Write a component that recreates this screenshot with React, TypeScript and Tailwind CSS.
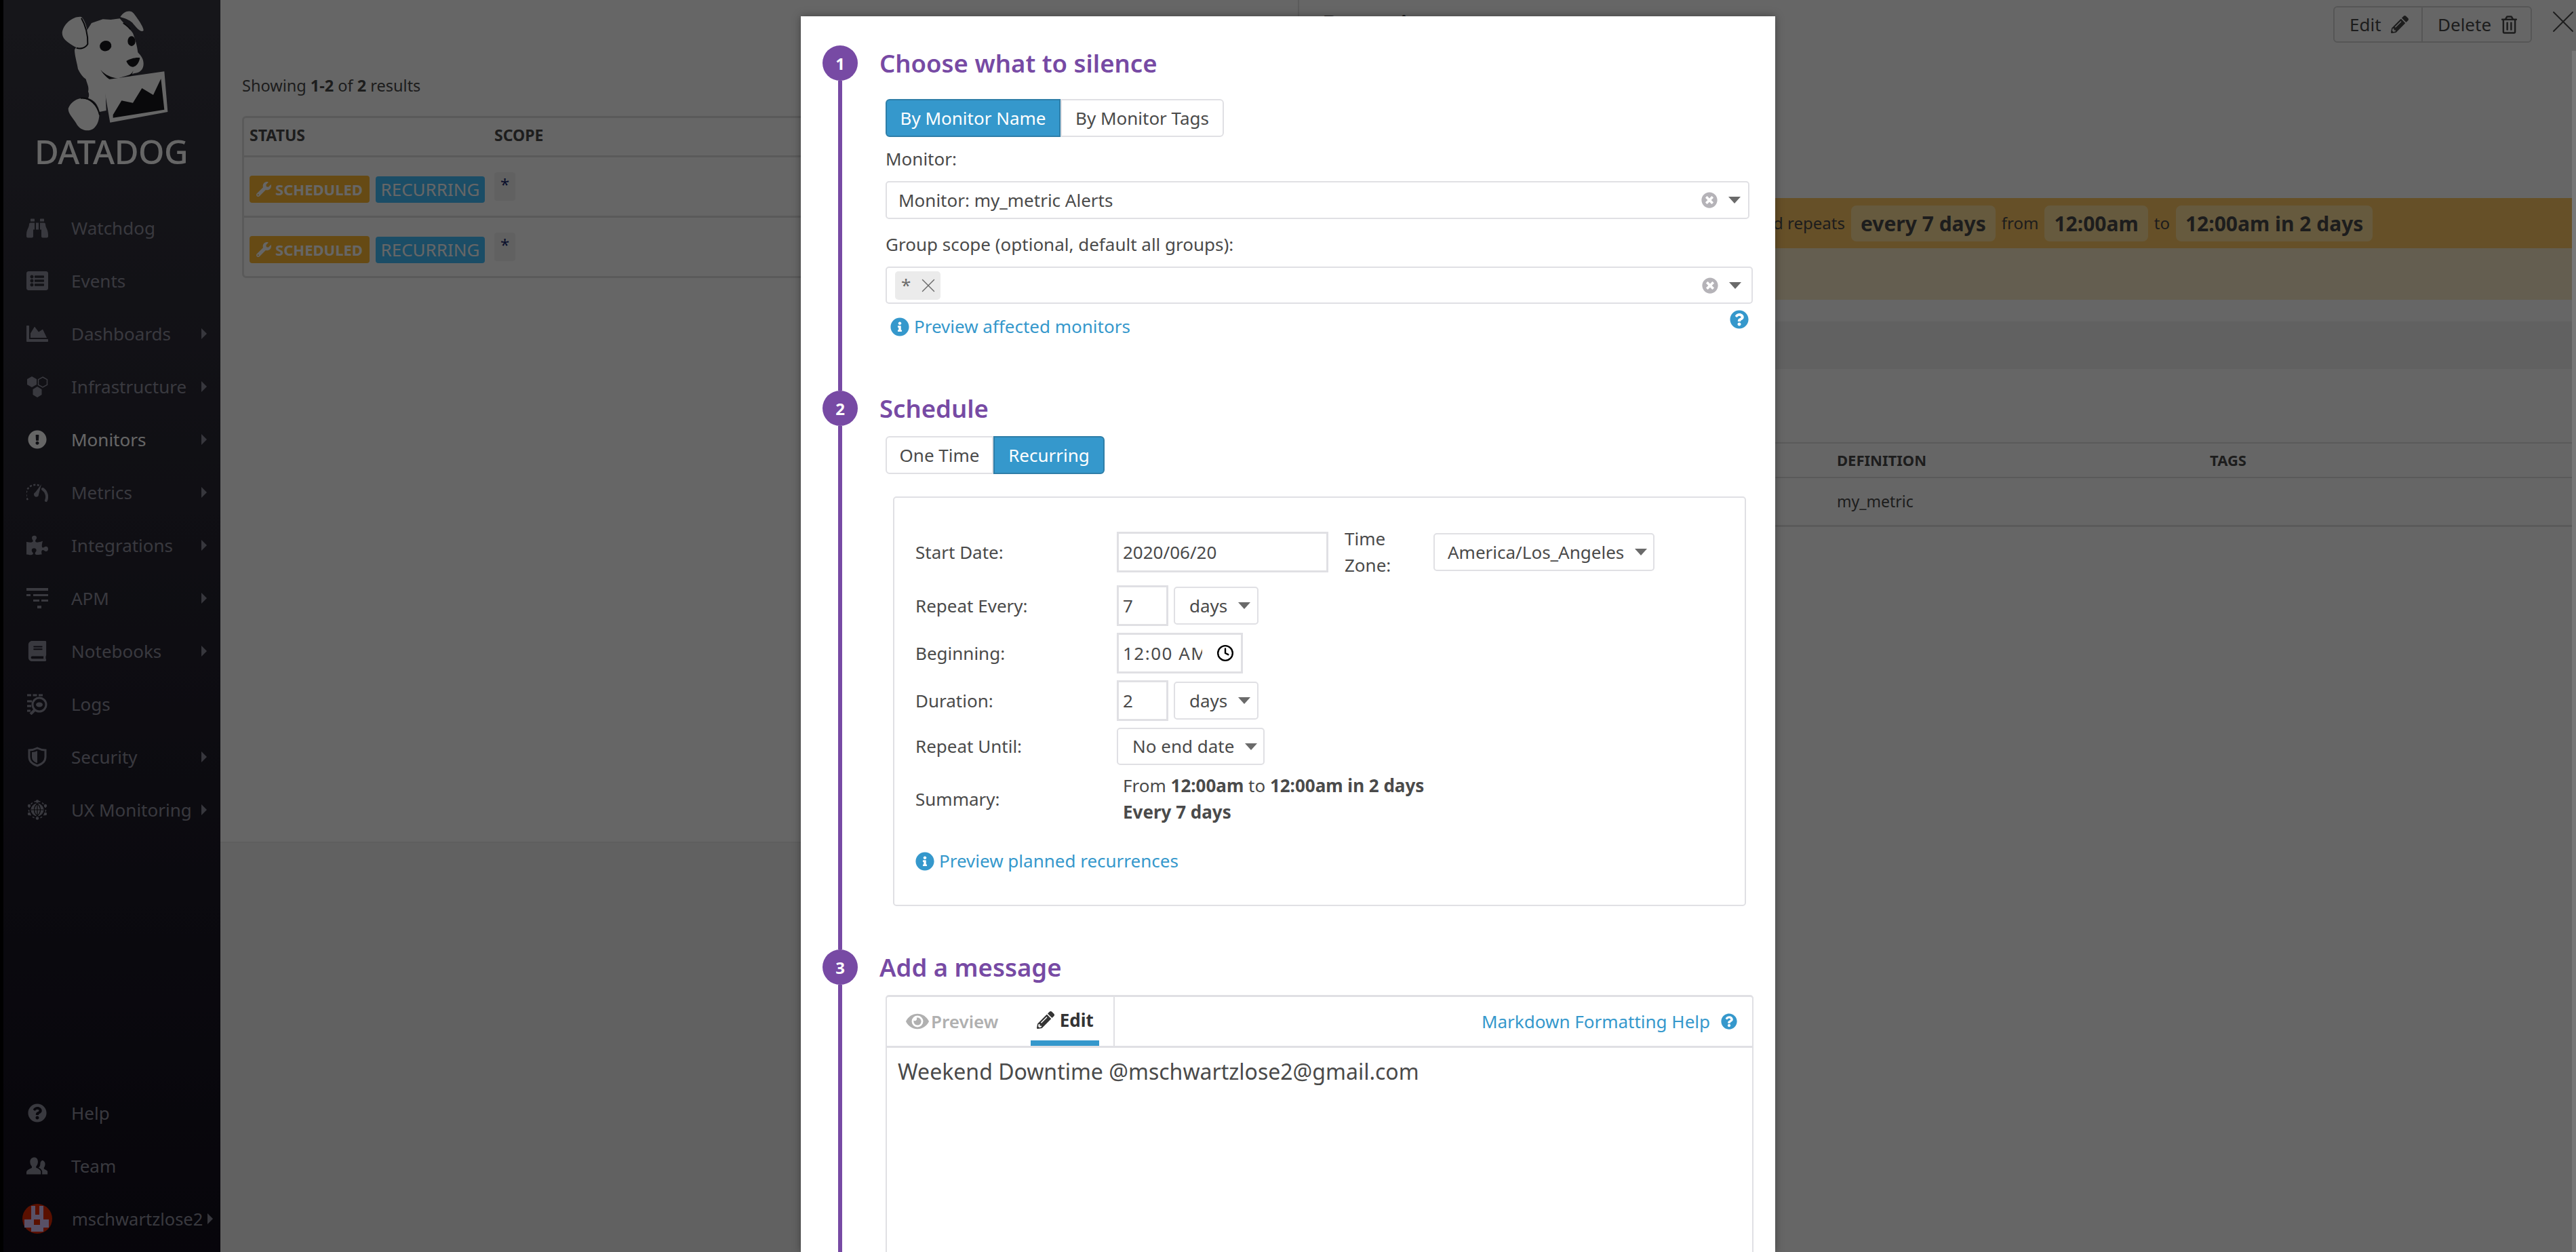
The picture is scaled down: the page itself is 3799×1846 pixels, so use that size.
import { Clock, X } from 'lucide-react';
import React from 'react';
import {
  FaBinoculars,
  FaBook,
  FaChartArea,
  FaExclamationCircle,
  FaEye,
  FaInfoCircle,
  FaListAlt,
  FaPencilAlt,
  FaPuzzlePiece,
  FaQuestionCircle,
  FaRegTrashAlt,
  FaTimesCircle,
  FaWrench,
} from 'react-icons/fa';

// 사이드바 커스텀 아이콘
const HexIcon = () => (
  <svg viewBox="0 0 32 32" className="w-[32px] h-[32px]" fill="currentColor">
    <path d="M8 1l7 4v8l-7 4-7-4V5z" />
    <path d="M16 16l6.500 4v8L16 32l-6.500-4v-8z" />
    <path d="M24 2l6.500 3.700v7.600L24 17l-6.500-3.700V5.700z" fill="none" stroke="currentColor" strokeWidth="1.500" />
  </svg>
);

const GaugeIcon = () => (
  <svg viewBox="0 0 32 28" className="w-[32px] h-[28px]" fill="none" stroke="currentColor">
    <path d="M2 25A14 14 0 0 1 19 4" strokeWidth="2.500" strokeDasharray="3 2.500" />
    <path d="M24 9a14 14 0 0 1 5 17" strokeWidth="4" strokeLinecap="round" />
    <path d="M22 2l-4 15a3.500 3.500 0 1 1-5-3z" fill="currentColor" stroke="none" />
  </svg>
);

const BarsIcon = () => (
  <svg viewBox="0 0 32 30" className="w-[32px] h-[30px]" fill="currentColor">
    <rect x="0" y="0" width="32" height="4" />
    <rect x="0" y="9" width="6" height="3" />
    <rect x="10" y="9" width="22" height="3" />
    <rect x="10" y="17" width="9" height="3" />
    <rect x="22" y="17" width="10" height="3" />
    <rect x="16" y="26" width="6" height="4" />
  </svg>
);

const LogsIcon = () => (
  <svg viewBox="0 0 32 32" className="w-[32px] h-[32px]" fill="none" stroke="currentColor">
    <path d="M1 3h24" strokeWidth="3" strokeDasharray="6 2.500" />
    <path d="M1 12h7M1 19h6M1 26h5" strokeWidth="3" />
    <circle cx="19" cy="17" r="10" strokeWidth="3" />
    <path d="M12 25l-6 6" strokeWidth="4" />
    <ellipse cx="19" cy="17" rx="5" ry="3.500" fill="currentColor" stroke="none" />
  </svg>
);

const ShieldIcon = () => (
  <svg viewBox="0 0 28 30" className="w-[28px] h-[30px]">
    <path d="M14 2c4 2 8 3 12 3v10c0 7-6 11-12 13C8 26 2 22 2 15V5c4 0 8-1 12-3z" fill="none" stroke="currentColor" strokeWidth="3" />
    <path d="M14 6c-2 1-5 2-8 2v7c0 5 4 8 8 9z" fill="currentColor" />
  </svg>
);

const GlobeIcon = () => (
  <svg viewBox="0 0 30 30" className="w-[30px] h-[30px]" fill="none" stroke="currentColor">
    <circle cx="15" cy="15" r="9" fill="currentColor" />
    <path d="M6 15h18M15 6v18M15 6c-6 5-6 13 0 18M15 6c6 5 6 13 0 18" stroke="#16141b" strokeWidth="1.200" />
    <circle cx="15" cy="15" r="12.500" strokeWidth="1.500" strokeDasharray="3 3" />
    <g fill="currentColor" stroke="none">
      <circle cx="15" cy="2.500" r="2.200" />
      <circle cx="15" cy="27.500" r="2.200" />
      <circle cx="3" cy="9" r="2.200" />
      <circle cx="27" cy="9" r="2.200" />
      <circle cx="3" cy="21" r="2.200" />
      <circle cx="27" cy="21" r="2.200" />
    </g>
  </svg>
);

const TeamIcon = () => (
  <svg viewBox="0 0 36 28" className="w-[36px] h-[28px]" fill="currentColor">
    <path d="M13 0c4 0 6 3 6 7 0 3-1 6-3 8v2c3 1 7 3 8 6v5H0v-4c1-4 6-5 9-7v-2c-2-2-3-5-3-8 0-4 3-7 7-7z" />
    <path d="M26 5c3 0 5 3 5 6 0 3-1 5-2 6v2c2 1 5 2 6 4v5H26v-5c-1-3-3-5-6-6 2-1 3-4 3-7 0-2 1-4 3-5z" />
  </svg>
);

const Avatar = () => (
  <svg viewBox="0 0 44 44" className="w-[44px] h-[44px] shrink-0">
    <circle cx="22" cy="22" r="22" fill="#e12800" />
    <path d="M13 3h6v13h6V3h6v20h8v12h-8v6H13v-6H3V23h10z" fill="#dcc8ff" />
    <rect x="17" y="23" width="9" height="8" fill="#e12800" />
  </svg>
);

const DogLogo = () => (
  <svg viewBox="0 0 660 561" className="w-[220px] h-[187px] block" fill="#ffffff">
    <path d="M195 72l50-17 35 2 40-5c15 20 45 45 58 65 12 30 18 55 22 85 15 15 25 30 25 50 0 25-15 40-40 42l-130 40 5 125-30 6c-5-30-25-55-50-60 5-10 5-20 0-30 5-20-5-35-10-55-15-10-25-25-35-45-5-30-15-60-15-85z" />
    <path d="M65 115C70 75 115 40 150 45c22 18 35 85 28 122-15 22-45 20-68 3-25-15-45-30-45-55z" />
    <path d="M150 50c18 30 30 75 28 115-12 20-35 22-50 17" fill="none" stroke="#18171c" strokeWidth="6" />
    <path d="M322 45c15-25 45-35 60-15 15 20 45 60 43 75-10 12-30-10-50-35-12-12-35-20-53-25z" />
    <path d="M335 72c12 8 25 18 32 28" fill="none" stroke="#18171c" strokeWidth="5" />
    <path d="M147 405c-25 5-45 20-55 45 0 25 20 40 35 65 15 30 50 40 75 25 20-15 28-40 28-75-10-35-45-60-83-60z" />
    <path d="M147 404c40-5 75 30 84 75" fill="none" stroke="#18171c" strokeWidth="6" />
    <ellipse cx="257" cy="173" rx="26" ry="23" fill="#18171c" transform="rotate(-15 257 173)" />
    <ellipse cx="372" cy="152" rx="17" ry="22" fill="#18171c" />
    <path d="M349 240c15-10 45-18 60-14-3 20-15 38-30 40-15 0-25-12-30-26z" fill="#18171c" />
    <path d="M235 278c20 25 50 35 75 38 30 0 60-10 70-35-5 15-8 25-15 30l-30 22-30 2c-30-10-55-30-70-57z" fill="#18171c" />
    <path d="M245 325l272-39 15 179-255 47z" />
    <path d="M290 478l38-63 50 10 40-65 50 30 34-72 15 137-227 36z" fill="#18171c" />
  </svg>
);

const navItems: { label: string; icon: React.ReactNode; arrow?: boolean; active?: boolean }[] = [
  { label: 'Watchdog', icon: <FaBinoculars className="w-[33px] h-[33px]" /> },
  { label: 'Events', icon: <FaListAlt className="w-[32px] h-[32px]" /> },
  { label: 'Dashboards', icon: <FaChartArea className="w-[36px] h-[32px]" />, arrow: true },
  { label: 'Infrastructure', icon: <HexIcon />, arrow: true },
  { label: 'Monitors', icon: <FaExclamationCircle className="w-[28px] h-[28px]" />, arrow: true, active: true },
  { label: 'Metrics', icon: <GaugeIcon />, arrow: true },
  { label: 'Integrations', icon: <FaPuzzlePiece className="w-[32px] h-[30px]" />, arrow: true },
  { label: 'APM', icon: <BarsIcon />, arrow: true },
  { label: 'Notebooks', icon: <FaBook className="w-[30px] h-[30px]" />, arrow: true },
  { label: 'Logs', icon: <LogsIcon /> },
  { label: 'Security', icon: <ShieldIcon />, arrow: true },
  { label: 'UX Monitoring', icon: <GlobeIcon />, arrow: true },
];

const Arrow = () => (
  <span className="block w-0 h-0 border-y-[8px] border-y-transparent border-l-[8px] border-l-[#8a8a98] shrink-0" />
);

const NavItem: React.FC<{ label: string; icon: React.ReactNode; arrow?: boolean; active?: boolean }> = ({
  label,
  icon,
  arrow,
  active,
}) => (
  <div className={`h-[78px] flex items-center pl-[34px] pr-[20px] ${active ? 'text-white' : 'text-[#8f8f9d]'}`}>
    <span className="w-[32px] flex justify-center shrink-0">{icon}</span>
    <span className="ml-[34px] flex-1 text-[26px] whitespace-nowrap">{label}</span>
    {arrow && <Arrow />}
  </div>
);

const Sidebar = () => (
  <div className="w-[325px] shrink-0 border-l-[5px] border-black h-full flex flex-col justify-between bg-gradient-to-b from-[#383842] to-[#120e1c]">
    <div>
      <div className="h-[297px] pt-[10px]">
        <div className="pl-[65px]">
          <DogLogo />
        </div>
        <div className="mt-[9px] ml-[46px] text-[49px] leading-[34px] font-medium tracking-[-0.5px] text-white">DATADOG</div>
      </div>
      {navItems.map(item => (
        <NavItem key={item.label} {...item} />
      ))}
    </div>
    <div className="pb-[10px]">
      <NavItem label="Help" icon={<FaQuestionCircle className="w-[28px] h-[28px]" />} />
      <NavItem label="Team" icon={<TeamIcon />} />
      <div className="h-[78px] flex items-center pl-[28px] text-[#8f8f9d]">
        <Avatar />
        <span className="ml-[29px] text-[25.500px]">mschwartzlose2</span>
        <span className="ml-[7px]">
          <Arrow />
        </span>
      </div>
    </div>
  </div>
);

const Badges = () => (
  <div className="flex items-center h-[89px] pl-[8px] pt-[8px] border-t-[3px] border-[#e0e0e0]">
    <span className="h-[40px] w-[177px] rounded-[4px] bg-[#ffb932] text-white flex items-center justify-center gap-[6px] text-[22px] font-bold">
      <FaWrench className="w-[22px] h-[22px]" />
      SCHEDULED
    </span>
    <span className="ml-[9px] h-[39px] w-[161px] rounded-[4px] bg-[#45c0ff] text-white flex items-center justify-center text-[26px]">
      RECURRING
    </span>
    <span className="ml-[14px] -mt-[8px] h-[42px] w-[31px] rounded-[4px] bg-[#f3f3f3] text-[#1a2a6e] flex justify-center text-[24px]">
      *
    </span>
  </div>
);

const LeftPanel = () => (
  <div className="w-[1591px] shrink-0 h-full flex flex-col bg-white border-r-2 border-[#e6e6e6]">
    <div className="h-[1243px] pl-[32px] border-b-2 border-[#ececec]">
      <div className="pt-[107px] text-[23.500px] leading-[39px] text-[#4a4a4a]">
        Showing <b>1-2</b> of <b>2</b> results
      </div>
      <div className="mt-[25px] border-[3px] border-[#e0e0e0] rounded-[6px]">
        <div className="h-[55px] pb-[4px] flex items-center pl-[8px] text-[23px] font-bold text-[#4a4a4a]">
          <span className="w-[361px]">STATUS</span>
          <span>SCOPE</span>
        </div>
        <Badges />
        <Badges />
      </div>
    </div>
    <div className="flex-1 bg-[#f3f3f3]" />
  </div>
);

const Chip: React.FC<{ children: React.ReactNode }> = ({ children }) => (
  <span className="h-[53px] px-[14px] rounded-[8px] bg-[#ffe19b] flex items-center font-bold text-[30px] text-[#4a4a4a]">
    {children}
  </span>
);

const RightPanel = () => (
  <div className="flex-1 h-full flex flex-col bg-white text-[#4a4a4a]">
    <div className="h-[292px] pl-[34px] flex items-start justify-between">
      <span className="pt-[11px] text-[36px] font-semibold leading-[50px]">Downtime</span>
      <div className="flex items-start -mr-[15px]">
        <div className="mt-[9px] h-[54px] w-[293px] flex items-center border-2 border-[#d6d6d6] rounded-[6px] text-[26px]">
          <div className="w-[130px] h-full flex items-center pl-[22px] border-r-2 border-[#d6d6d6]">
            Edit
            <FaPencilAlt className="ml-[14px] w-[26px] h-[26px]" />
          </div>
          <div className="flex-1 flex items-center pl-[22px]">
            Delete
            <FaRegTrashAlt className="ml-[15px] w-[23px] h-[27px]" />
          </div>
        </div>
        <X className="ml-[18px] mt-[4px] w-[56px] h-[56px] shrink-0" strokeWidth={0.800} />
      </div>
    </div>
    <div className="h-[74px] bg-[#ffc864] flex items-center gap-[9px] text-[24px]">
      <span className="w-[805px] text-right whitespace-nowrap">This downtime is scheduled and repeats</span>
      <Chip>every 7 days</Chip>
      <span>from</span>
      <Chip>12:00am</Chip>
      <span>to</span>
      <Chip>12:00am in 2 days</Chip>
    </div>
    <div className="h-[76px] bg-[#faebc8]" />
    <div className="h-[32px]" />
    <div className="h-[70px] bg-[#f3f3f3]" />
    <div className="h-[108px]" />
    <div className="h-[51px] border-t-2 border-[#e0e0e0] flex items-center pl-[793px] text-[22px] font-bold">
      <span className="w-[550px]">DEFINITION</span>
      <span>TAGS</span>
    </div>
    <div className="h-[74px] border-b-[3px] border-t-2 border-[#e0e0e0] flex items-center pl-[793px] text-[23px]">
      my_metric
    </div>
  </div>
);

const Step: React.FC<{ n: number; title: string; children: React.ReactNode; className: string }> = ({
  n,
  title,
  children,
  className,
}) => (
  <div className={`flex ${className}`}>
    <div className="w-[52px] shrink-0 flex flex-col items-center">
      <span className="w-[52px] h-[52px] rounded-full bg-[#774aa4] text-white text-[24px] font-bold flex items-center justify-center shrink-0">
        {n}
      </span>
      <span className="w-[6px] flex-1 bg-[#774aa4]" />
    </div>
    <div className="flex-1 min-w-0">
      <h2 className="h-[52px] pl-[32px] flex items-center text-[36.500px] font-semibold text-[#774aa4]">{title}</h2>
      <div className="pl-[41px]">{children}</div>
    </div>
  </div>
);

const Toggle: React.FC<{ left: string; right: string; active: 'left' | 'right'; leftW: string; rightW: string; className: string }> = ({
  left,
  right,
  active,
  leftW,
  rightW,
  className,
}) => {
  const on = 'bg-[#3598cc] border-[#2e7ea8] text-white';
  const off = 'bg-white border-[#e0e0e4] text-[#4a4a4a]';
  return (
    <div className={`flex h-[56px] text-[26px] ${className}`}>
      <span className={`${leftW} flex items-center justify-center border-2 rounded-l-[6px] ${active === 'left' ? on : off}`}>{left}</span>
      <span className={`${rightW} flex items-center justify-center border-2 rounded-r-[6px] ${active === 'right' ? on : off}`}>{right}</span>
    </div>
  );
};

const Caret = () => <span className="block w-0 h-0 border-x-[9px] border-x-transparent border-t-[10px] border-t-[#6a6a6a] shrink-0" />;

const SelectBox: React.FC<{ children: React.ReactNode; className: string }> = ({ children, className }) => (
  <span className={`flex items-center border-2 border-[#e0e0e4] rounded-[5px] bg-white text-[26px] text-[#4a4a4a] whitespace-nowrap ${className}`}>
    {children}
  </span>
);

const Box: React.FC<{ value: string; className: string }> = ({ value, className }) => (
  <input
    readOnly
    value={value}
    className={`h-[60px] border-[3px] border-[#e0e0e4] pl-[6px] text-[26px] text-[#4a4a4a] outline-none ${className}`}
  />
);

const FormRow: React.FC<{ label: string; children: React.ReactNode; className?: string }> = ({ label, children, className }) => (
  <div className={`flex items-center ${className ?? ''}`}>
    <span className="w-[297px] shrink-0 text-[26px] text-[#4a4a4a]">{label}</span>
    {children}
  </div>
);

const LinkRow: React.FC<{ children: React.ReactNode; className?: string }> = ({ children, className }) => (
  <span className={`flex items-center text-[26px] text-[#3598cc] ${className ?? ''}`}>
    <FaInfoCircle className="w-[28px] h-[28px] mr-[7px]" />
    {children}
  </span>
);

const ClearCaret = () => (
  <span className="ml-auto flex items-center gap-[16px]">
    <FaTimesCircle className="w-[24px] h-[24px] text-[#b5b3b8]" />
    <Caret />
  </span>
);

const Modal = () => (
  <div className="absolute z-20 top-[24px] left-[1181px] w-[1437px] bottom-0 bg-white overflow-hidden shadow-[0_0_12px_rgba(0,0,0,0.35)] pt-[43px] pl-[32px] text-[#4a4a4a] text-[26px] leading-[39px]">
    <Step n={1} title="Choose what to silence" className="h-[509px]">
      <Toggle left="By Monitor Name" right="By Monitor Tags" active="left" leftW="w-[258px]" rightW="w-[241px]" className="mt-[27px]" />
      <div className="mt-[13px]">Monitor:</div>
      <SelectBox className="mt-[13px] w-[1274px] h-[56px] pl-[17px] pr-[11px]">
        Monitor: my_metric Alerts
        <ClearCaret />
      </SelectBox>
      <div className="mt-[18px]">Group scope (optional, default all groups):</div>
      <SelectBox className="mt-[13px] w-[1279px] h-[55px] pl-[12px] pr-[15px]">
        <span className="h-[42px] w-[67px] rounded-[5px] bg-[#ebebeb] flex items-center pl-[9px] text-[#6a6a6a] overflow-hidden">
          *
          <X className="ml-[9px] w-[34px] h-[34px] shrink-0" strokeWidth={1} />
        </span>
        <ClearCaret />
      </SelectBox>
      <div className="w-[1273px] flex justify-between items-start mt-[9px]">
        <LinkRow className="ml-[7px] mt-[5px]">Preview affected monitors</LinkRow>
        <FaQuestionCircle className="w-[28px] h-[28px] text-[#3598cc]" />
      </div>
    </Step>

    <Step n={2} title="Schedule" className="h-[824px]">
      <Toggle left="One Time" right="Recurring" active="right" leftW="w-[159px]" rightW="w-[164px]" className="mt-[15px]" />
      <div className="mt-[33px] ml-[11px] w-[1258px] h-[604px] border-2 border-[#e0e0e4] rounded-[5px] pl-[31px] pt-[41px]">
        <FormRow label="Start Date:">
          <Box value="2020/06/20" className="w-[312px]" />
          <span className="ml-[24px] w-[131px]">
            Time
            <br />
            Zone:
          </span>
          <SelectBox className="h-[56px] w-[326px] pl-[19px] pr-[9px]">
            America/Los_Angeles
            <span className="ml-auto">
              <Caret />
            </span>
          </SelectBox>
        </FormRow>
        <FormRow label="Repeat Every:" className="mt-[10px]">
          <Box value="7" className="w-[76px]" />
          <SelectBox className="ml-[8px] h-[56px] w-[125px] pl-[21px] pr-[10px]">
            days
            <span className="ml-auto">
              <Caret />
            </span>
          </SelectBox>
        </FormRow>
        <FormRow label="Beginning:" className="mt-[10px]">
          <div className="h-[60px] w-[186px] border-[3px] border-[#e0e0e4] pl-[6px] flex items-center">
            <span className="w-[117px] overflow-hidden whitespace-nowrap tracking-[1.500px]">12:00 AM</span>
            <Clock className="ml-[21px] w-[26px] h-[26px] text-black" strokeWidth={2.200} />
          </div>
        </FormRow>
        <FormRow label="Duration:" className="mt-[10px]">
          <Box value="2" className="w-[76px]" />
          <SelectBox className="ml-[8px] h-[56px] w-[125px] pl-[21px] pr-[10px]">
            days
            <span className="ml-auto">
              <Caret />
            </span>
          </SelectBox>
        </FormRow>
        <FormRow label="Repeat Until:" className="mt-[10px]">
          <SelectBox className="h-[55px] w-[218px] pl-[21px] pr-[9px]">
            No end date
            <span className="ml-auto">
              <Caret />
            </span>
          </SelectBox>
        </FormRow>
        <FormRow label="Summary:" className="mt-[11px]">
          <div className="pl-[9px]">
            From <b>12:00am</b> to <b>12:00am in 2 days</b>
            <br />
            <b>Every 7 days</b>
          </div>
        </FormRow>
        <LinkRow className="mt-[33px]">Preview planned recurrences</LinkRow>
      </div>
    </Step>

    <Step n={3} title="Add a message" className="h-[500px]">
      <div className="mt-[15px] w-[1280px] h-[500px] border-x-2 border-t-[3px] border-[#e0e0e4] rounded-t-[5px]">
        <div className="h-[75px] border-b-[3px] border-[#e0e0e4] flex">
          <div className="w-[336px] h-full border-r-2 border-[#e0e0e4] flex pl-[28px]">
            <span className="flex items-center text-[#b0b0b0] font-semibold">
              <FaEye className="w-[34px] h-[30px] mr-[3px]" />
              Preview
            </span>
            <span className="ml-[48px] w-[101px] pt-[4px] border-b-[8px] border-[#3598cc] flex items-center justify-center font-bold text-[#333]">
              <FaPencilAlt className="w-[26px] h-[26px] mr-[8px]" />
              Edit
            </span>
          </div>
          <span className="ml-auto pr-[22px] flex items-center text-[#3598cc]">
            Markdown Formatting Help
            <FaQuestionCircle className="ml-[16px] w-[24px] h-[24px]" />
          </span>
        </div>
        <div className="pl-[16px] pt-[15px] text-[32px] leading-[40px] text-[#4a4a4a]">Weekend Downtime @mschwartzlose2@gmail.com</div>
      </div>
    </Step>
  </div>
);

const App: React.FC = () => {
  return (
    <div className="relative w-[3799px] h-[1846px] overflow-hidden flex bg-white font-['Noto_Sans',sans-serif]">
      <Sidebar />
      <LeftPanel />
      <RightPanel />
      <div className="w-[6px] shrink-0" />

      {/* 모달 오버레이 */}
      <div className="absolute inset-0 z-10 bg-black/60" />
      <div className="absolute z-20 top-[75px] right-0 bottom-0 w-[6px] bg-[#777]" />
      <Modal />
    </div>
  );
};

export default App;
